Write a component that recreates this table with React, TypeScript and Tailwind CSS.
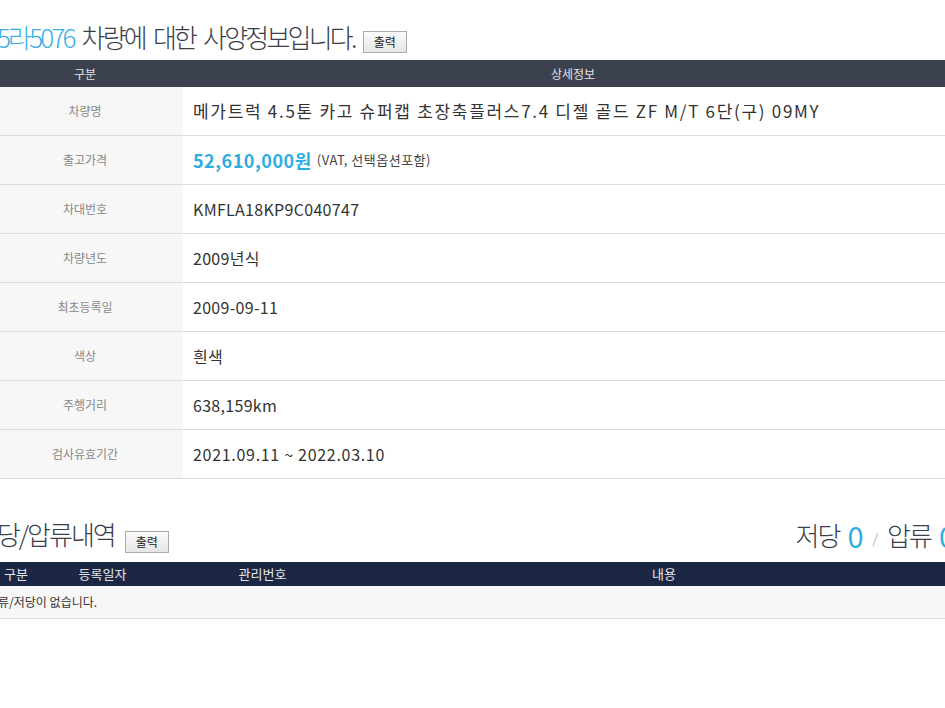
import React from "react";

const kr = { fontFamily: '"Noto Sans CJK KR", "Noto Sans", sans-serif' };

const specs: { label: string; value: React.ReactNode }[] = [
  {
    label: "차량명",
    value: <span className="text-[17px] tracking-[1.7px]">메가트럭 4.5톤 카고 슈퍼캡 초장축플러스7.4 디젤 골드 ZF M/T 6단(구) 09MY</span>,
  },
  {
    label: "출고가격",
    value: (
      <>
        <span className="text-[18px] font-bold tracking-[0.5px] text-[#2eaee0]">52,610,000원</span>
        <span className="ml-[5px] text-[13px] tracking-[0.5px] text-[#444]">(VAT, 선택옵션포함)</span>
      </>
    ),
  },
  { label: "차대번호", value: "KMFLA18KP9C040747" },
  { label: "차량년도", value: "2009년식" },
  { label: "최초등록일", value: "2009-09-11" },
  { label: "색상", value: "흰색" },
  { label: "주행거리", value: "638,159km" },
  { label: "검사유효기간", value: <span className="tracking-[0.7px]">2021.09.11 ~ 2022.03.10</span> },
];

const PrintButton = () => (
  <button className="h-[22px] px-[10px] border border-[#aaa] bg-gradient-to-b from-[#fbfbfb] to-[#e6e6e6] text-[12px] text-[#222] leading-none">
    출력
  </button>
);

export default function App() {
  return (
    <div className="w-[945px] h-[708px] overflow-hidden bg-white" style={kr}>
      <div className="w-[976px] -ml-[13px]">
        {/* 사양정보 */}
        <div className="flex items-end h-[56px] pb-[2px] pl-[10px]">
          <h2 className="text-[26px] font-light leading-[34px] text-[#3a3e4a] tracking-[-2.8px] [word-spacing:5px]">
            <span className="text-[#3aafe2]">5라5076</span> 차량에 대한 사양정보입니다.
          </h2>
          <div className="ml-[8px] mb-[1px]">
            <PrintButton />
          </div>
        </div>
        <div className="mt-[4px]">
          <div className="flex h-[27px] bg-[#3c414f] text-[12px] text-[#e3e3e3] items-center">
            <div className="w-[196px] text-center">구분</div>
            <div className="flex-1 text-center">상세정보</div>
          </div>
          {specs.map((s) => (
            <div key={s.label} className="flex h-[49px] border-b border-[#dcdcdc]">
              <div className="w-[196px] bg-[#f7f7f7] flex items-center justify-center text-[12px] text-[#888]">
                {s.label}
              </div>
              <div className="flex-1 flex items-center pl-[10px] text-[16px] tracking-[0.3px] text-[#333]">
                {s.value}
              </div>
            </div>
          ))}
        </div>

        {/* 저당/압류내역 */}
        <div className="flex items-end justify-between h-[83px] pb-[8px]">
          <div className="flex items-end">
            <h2 className="-ml-[12px] mb-[3px] text-[26px] font-light leading-[34px] text-[#3a3e4a] tracking-[-2px]">
              저당/압류내역
            </h2>
            <div className="ml-[10px] mb-[1px]">
              <PrintButton />
            </div>
          </div>
          <div className="flex items-end mb-[2px] text-[26px] font-light leading-[34px] text-[#3a3e4a] tracking-[-2px] pr-[10px]">
            <span>저당</span>
            <span className="ml-[8px] text-[29px] font-normal text-[#2eaee0]">0</span>
            <span className="mx-[11px] text-[14px] leading-[28px] text-[#999]">/</span>
            <span>압류</span>
            <span className="ml-[8px] text-[29px] font-normal text-[#2eaee0]">0</span>
          </div>
        </div>
        <div className="grid grid-cols-[58px_115px_205px_1fr] h-[24px] items-center bg-[#1b2744] text-[13px] text-[#e6e6e6]">
          <div className="text-center">구분</div>
          <div className="text-center">등록일자</div>
          <div className="text-center">관리번호</div>
          <div className="text-center">내용</div>
        </div>
        <div className="h-[33px] flex items-center bg-[#f7f7f7] border-b border-[#dcdcdc] text-[12px] text-[#333]">
          <span>압류/저당이 없습니다.</span>
        </div>
      </div>
    </div>
  );
}
